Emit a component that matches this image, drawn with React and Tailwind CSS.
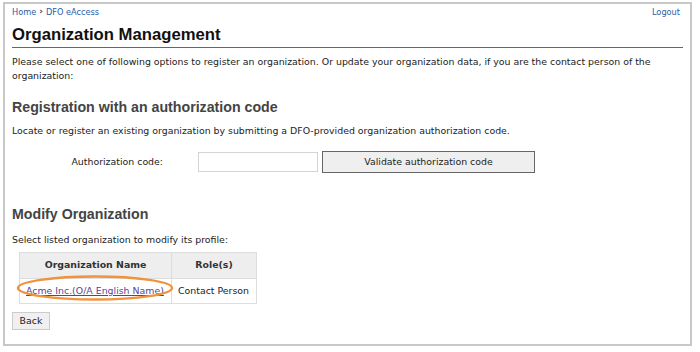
import React from "react";

const verdana = { fontFamily: '"DejaVu Sans", Verdana, sans-serif' };
const arial = { fontFamily: '"Liberation Sans", Arial, sans-serif' };

export default function App() {
  return (
    <div className="w-[700px] h-[352px] bg-white overflow-hidden">
      <div
        className="relative ml-[3px] mt-[2px] w-[689px] h-[344px] border-2 border-[#c8c8c8] px-[7px] text-[9.4px] text-[#222]"
        style={verdana}
      >
        {/* breadcrumb */}
        <div className="flex h-[16px] items-center justify-between pr-[3px] text-[8.2px] text-[#2b5ca8]">
          <div className="flex items-center">
            <a className="cursor-pointer">Home</a>
            <span className="mx-[3px] text-[9px] font-bold leading-none text-[#444]">›</span>
            <a className="cursor-pointer">DFO eAccess</a>
          </div>
          <a className="cursor-pointer">Logout</a>
        </div>

        <h1
          className="mt-[3px] border-b border-[#666] text-[16.7px] font-bold leading-[24px] text-[#111]"
          style={arial}
        >
          Organization Management
        </h1>

        <p className="mt-[7px] leading-[14px]">
          Please select one of following options to register an organization. Or update your organization data, if you are the contact person of the organization:
        </p>

        <h2 className="mt-[14px] text-[14.2px] font-bold leading-[20px] text-[#444]" style={arial}>
          Registration with an authorization code
        </h2>

        <p className="mt-[7px] leading-[14px]">
          Locate or register an existing organization by submitting a DFO-provided organization authorization code.
        </p>

        <div className="mt-[13px] flex h-[22px] items-center">
          <label className="w-[151px] text-right">Authorization code:</label>
          <input className="ml-[35px] h-[20px] w-[120px] border border-[#d4d4d4] bg-white outline-none" />
          <button className="ml-[4px] h-[22px] w-[213px] border border-[#666] bg-[#efefef] text-[9.4px] text-[#222]">
            Validate authorization code
          </button>
        </div>

        <h2 className="mt-[31px] text-[14.2px] font-bold leading-[20px] text-[#444]" style={arial}>
          Modify Organization
        </h2>

        <p className="mt-[9px] leading-[14px]">Select listed organization to modify its profile:</p>

        <table className="ml-[7px] mt-[5px] border-collapse">
          <thead>
            <tr className="h-[26px] bg-[#eeeeee]">
              <th className="w-[152px] border border-[#dddddd] font-bold text-[#333]">Organization Name</th>
              <th className="w-[85px] border border-[#dddddd] font-bold text-[#333]">Role(s)</th>
            </tr>
          </thead>
          <tbody>
            <tr className="h-[25px]">
              <td className="border border-[#dddddd] pl-[6px] whitespace-nowrap">
                <a className="cursor-pointer text-[#5b3f96] underline">Acme Inc.(O/A English Name)</a>
              </td>
              <td className="border border-[#dddddd] pl-[6px] whitespace-nowrap">Contact Person</td>
            </tr>
          </tbody>
        </table>

        <button className="mt-[8px] h-[18px] w-[38px] border border-[#cccccc] bg-[#f0f0f0] text-[9.4px] text-[#222]">
          Back
        </button>

        {/* highlight ring drawn over the link */}
        <svg className="pointer-events-none absolute left-[10px] top-[270px]" width="160" height="28" viewBox="0 0 160 28">
          <ellipse cx="80" cy="14" rx="77" ry="11.5" fill="none" stroke="#f1923c" strokeWidth="2.4" />
        </svg>
      </div>
    </div>
  );
}
